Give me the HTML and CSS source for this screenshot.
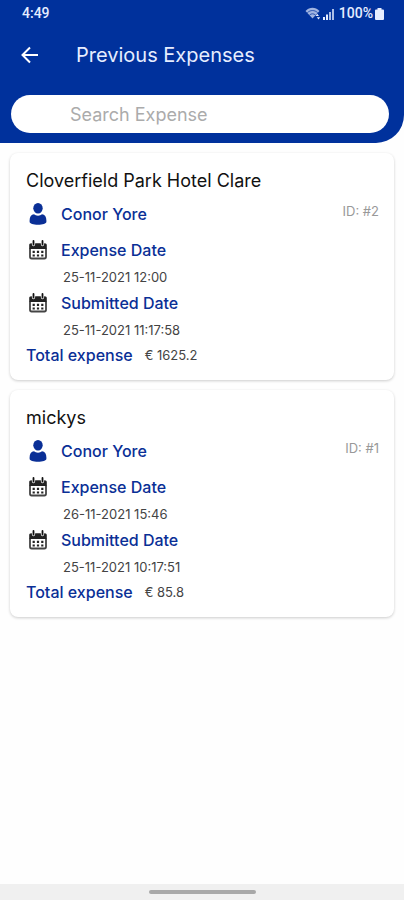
FILE: index.html
```html
<!DOCTYPE html>
<html lang="en">
<head>
<meta charset="utf-8">
<meta name="viewport" content="width=device-width, initial-scale=1">
<title>Previous Expenses</title>
<link rel="stylesheet" href="styles.css">
</head>
<body>
<svg class="defs" aria-hidden="true">
  <symbol id="person" viewBox="0 0 18 22">
    <ellipse cx="9" cy="5.3" rx="4.700" ry="5.300"/>
    <path d="M.6 17.500c0-3.800 1.600-5.800 4.400-6.200 1 .9 2.300 1.400 4 1.400s3-.5 4-1.400c2.800.4 4.400 2.400 4.400 6.200v1.300c0 2-3.800 3-8.400 3s-8.400-1-8.400-3z"/>
  </symbol>
  <symbol id="calendar" viewBox="0 0 20 20">
    <path d="M2 8.500v8.300c0 1 .6 1.700 1.600 1.700h12.800c1 0 1.600-.7 1.600-1.700V8.500" fill="none" stroke="#444" stroke-width="1.800"/>
    <path d="M1.200 9V5.200C1.200 4 2 3.300 3.200 3.300h.6c0 2 .6 3 1.700 3s1.700-1 1.700-3h5.600c0 2 .6 3 1.700 3s1.700-1 1.700-3h.6c1.200 0 2 .7 2 1.900V9z"/>
    <path d="M5.500 1v3.600M14.500 1v3.600" fill="none" stroke="#111" stroke-width="1.800" stroke-linecap="round"/>
    <path d="M4.600 10.700h2.200v2.200H4.600zM8.900 10.700h2.200v2.200H8.900zM13.200 10.700h2.200v2.200h-2.200zM4.600 14.400h2.200v2.200H4.600zM8.900 14.400h2.200v2.200H8.900zM13.200 14.400h2.200v2.200h-2.200z"/>
  </symbol>
</svg>
<header class="header">
  <div class="status">
    <span>4:49</span>
    <span class="status-right">
      <svg class="wifi" viewBox="0 0 16 13" aria-hidden="true">
        <path d="M.5 4C4.800-.2 10.200-.2 14.500 4L7.500 11.500z" opacity=".7"/>
        <path d="M2.300 5.700c3.200-2.900 7.200-2.900 10.400 0M4.500 8c1.900-1.600 4.100-1.600 6 0" fill="none" stroke="#00319c" stroke-width=".7"/>
        <path d="M10.500 9l1.700-2.200L14 9zM11.800 10.200h3.400L13.500 12.500z"/>
      </svg>
      <svg class="signal" viewBox="0 0 12 12" aria-hidden="true">
        <path d="M0 9h2v3H0zM3 6.500h2V12H3z"/><path d="M6 4h2v8H6zM9 1h2v11H9z" opacity=".75"/>
      </svg>
      <span>100%</span>
      <svg class="battery" viewBox="0 0 9 12" aria-hidden="true"><path d="M2.500 0h4v1.500H8q1 0 1 1V11q0 1-1 1H1q-1 0-1-1V2.500q0-1 1-1h1.500z"/></svg>
    </span>
  </div>
  <div class="bar">
    <button class="back" type="button" aria-label="Back">
      <svg viewBox="0 0 18 18" aria-hidden="true"><path d="M17 9H2M9 1.500L1.500 9 9 16.500"/></svg>
    </button>
    <h1>Previous Expenses</h1>
  </div>
  <input class="search" type="search" placeholder="Search Expense" aria-label="Search Expense">
</header>
<main class="list">
  <article class="card">
    <h2>Cloverfield Park Hotel Clare</h2>
    <div class="row person"><svg class="icon-person" aria-hidden="true"><use href="#person"/></svg><span class="label">Conor Yore</span><span class="id">ID: #2</span></div>
    <div class="row"><svg class="icon-cal" aria-hidden="true"><use href="#calendar"/></svg><span class="label">Expense Date</span></div>
    <p class="date">25-11-2021 12:00</p>
    <div class="row"><svg class="icon-cal" aria-hidden="true"><use href="#calendar"/></svg><span class="label">Submitted Date</span></div>
    <p class="date">25-11-2021 11:17:58</p>
    <div class="total"><span class="label">Total expense</span><span class="amount">€ 1625.2</span></div>
  </article>
  <article class="card">
    <h2>mickys</h2>
    <div class="row person"><svg class="icon-person" aria-hidden="true"><use href="#person"/></svg><span class="label">Conor Yore</span><span class="id">ID: #1</span></div>
    <div class="row"><svg class="icon-cal" aria-hidden="true"><use href="#calendar"/></svg><span class="label">Expense Date</span></div>
    <p class="date">26-11-2021 15:46</p>
    <div class="row"><svg class="icon-cal" aria-hidden="true"><use href="#calendar"/></svg><span class="label">Submitted Date</span></div>
    <p class="date">25-11-2021 10:17:51</p>
    <div class="total"><span class="label">Total expense</span><span class="amount">€ 85.8</span></div>
  </article>
</main>
<footer class="nav"><span class="handle"></span></footer>
</body>
</html>
```
FILE: styles.css
```css
* { box-sizing: border-box; }
body {
  margin: 0;
  min-height: 100vh;
  display: flex;
  flex-direction: column;
  background: #fefefe;
  color: #111;
  font-family: Inter, "Liberation Sans", sans-serif;
}
h1, h2, p { margin: 0; font-weight: 400; }
.defs { display: none; }
.header {
  background: #00319c;
  color: #e6edff;
  padding: 0 15px 10px 11px;
  border-bottom-right-radius: 28px;
}
.status {
  display: flex;
  justify-content: space-between;
  align-items: center;
  height: 27px;
  padding: 0 5px 0 11px;
  font: 500 14px/27px Roboto, sans-serif;
}
.status-right { display: flex; align-items: center; gap: 2px; }
.status svg { fill: #e6edff; }
.wifi { width: 16px; height: 13px; }
.signal { width: 12px; height: 12px; margin-right: 2px; }
.battery { width: 9px; height: 12px; }
.bar { display: flex; align-items: center; height: 56px; gap: 35px; }
.back { width: 30px; height: 40px; padding: 0 0 0 10px; border: 0; background: none; }
.back svg {
  display: block;
  width: 18px;
  height: 18px;
  fill: none;
  stroke: #fff;
  stroke-width: 2;
}
h1 { font-size: 20px; line-height: 28px; }
.search {
  display: block;
  width: 100%;
  height: 38px;
  margin-top: 12px;
  padding: 0 59px;
  border: 0;
  border-radius: 19px;
  background: #fff;
  color: #111;
  font: 400 18px/24px Inter, sans-serif;
}
.search::placeholder { color: #ababab; opacity: 1; }
.list { flex: 1; display: flex; flex-direction: column; gap: 10px; padding: 10px; }
.card {
  padding: 14px 15px 13px 16px;
  border-radius: 8px;
  background: #fff;
  box-shadow: 0 1px 3px rgba(0, 0, 0, .2);
}
h2 { font-size: 18px; line-height: 28px; margin-bottom: 7px; }
.row { display: flex; align-items: center; height: 24px; }
.person { margin-bottom: 12px; }
.label { color: #0a2f96; font-size: 16px; line-height: 24px; font-weight: 500; }
.icon-person { width: 18px; height: 22px; margin: 0 14px 0 3px; fill: #0a2f96; }
.icon-cal { width: 20px; height: 20px; margin: 0 13px 0 2px; fill: #222; }
.id { margin-left: auto; font-size: 13px; line-height: 20px; padding-bottom: 6px; color: #999; }
.date { padding: 5px 0 4px 37px; font-size: 13px; line-height: 20px; color: #444; }
.total { display: flex; align-items: center; gap: 12px; margin-top: -1px; }
.amount { font-size: 13px; line-height: 20px; color: #444; }
.nav { display: flex; justify-content: center; align-items: center; height: 16px; background: #f0f0f0; }
.handle { width: 107px; height: 4px; border-radius: 2px; background: #a8a8a8; }
```
